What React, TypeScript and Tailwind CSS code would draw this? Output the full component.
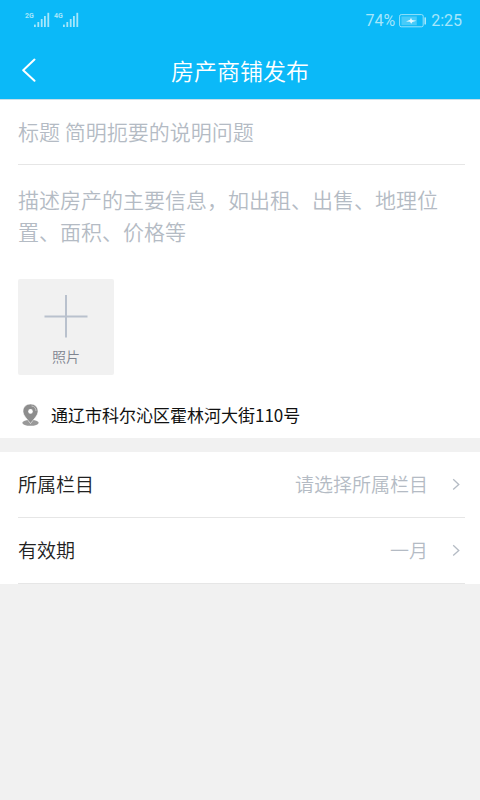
import React from "react";

const sans = "font-['Noto_Sans_CJK_SC','Noto_Sans',sans-serif]";

function Signal({ label }: { label: string }) {
  return (
    <div className="flex h-4 items-start">
      <span className="w-[9px] font-['Roboto',sans-serif] text-[7px] leading-2 font-bold">{label}</span>
      <svg width="16" height="16" viewBox="0 0 16 16" fill="currentColor" aria-hidden="true">
        <rect x="0" y="12.6" width="1.8" height="2.4" />
        <rect x="3.4" y="10" width="1.8" height="5" />
        <rect x="6.8" y="7" width="1.8" height="8" />
        <rect x="10" y="4" width="1.8" height="11" />
        <rect x="13.4" y="0.8" width="1.8" height="14.2" />
      </svg>
    </div>
  );
}

function Battery() {
  return (
    <svg width="28" height="14" viewBox="0 0 28 14" fill="none" aria-hidden="true">
      <rect x="0.6" y="0.6" width="23.6" height="12.2" rx="1.6" stroke="currentColor" strokeWidth="0.9" />
      <rect x="2.4" y="2.4" width="15.4" height="8.8" fill="currentColor" opacity="0.4" />
      <rect x="25.4" y="3.2" width="1.6" height="7.4" rx="0.6" fill="currentColor" />
      <path d="M7 7.4 L11 5.8 L12 3.8 L13 6 L17.4 6.8 L13.4 8 L12.2 9.8 L11 7.8 Z" fill="#e2f8ff" />
    </svg>
  );
}

function SelectRow({ id, label, options }: { id: string; label: string; options: string[] }) {
  return (
    <div className="ml-[18px] mr-[15px] flex h-[66px] items-center border-b border-[#e6e6e6] text-[19px]">
      <label htmlFor={id} className="shrink-0 text-[#222]">
        {label}
      </label>
      <select
        id={id}
        className="min-w-0 flex-1 appearance-none bg-transparent text-right font-[350] text-[#b4bbc4] outline-none [text-align-last:right]"
      >
        {options.map((option) => (
          <option key={option}>{option}</option>
        ))}
      </select>
      <svg className="ml-6 mr-1 shrink-0" width="9" height="14" viewBox="0 0 9 14" fill="none" aria-hidden="true">
        <path d="M1.2 1.2 L6.8 6.4 L1.2 11.6" stroke="#b4bbc4" strokeWidth="1.3" />
      </svg>
    </div>
  );
}

export default function App() {
  return (
    <div className={`min-h-screen bg-[#f1f1f1] font-[350] ${sans}`}>
      <header className="border-b border-[#c9dfe8] bg-[#0bb9f8]">
        <div className="flex h-10 items-center justify-between pl-[25px] pr-[18px] text-[#a6e6fb]">
          <div className="flex gap-1">
            <Signal label="2G" />
            <Signal label="4G" />
          </div>
          <div className="flex items-center gap-1 pt-0.5 font-['Roboto',sans-serif] text-base font-normal">
            <span>74%</span>
            <Battery />
            <span>2:25</span>
          </div>
        </div>
        <div className="grid h-[59px] grid-cols-[1fr_auto_1fr] items-center text-white">
          <button type="button" aria-label="返回" className="ml-5 justify-self-start">
            <svg width="18" height="24" viewBox="0 0 18 24" fill="none" aria-hidden="true">
              <path
                d="M14.5 1.6 L3.2 12.2 L14.5 22.8"
                stroke="currentColor"
                strokeWidth="2"
                strokeLinecap="round"
                strokeLinejoin="round"
              />
            </svg>
          </button>
          <h1 className="pt-px text-[23px] font-[350]">房产商铺发布</h1>
        </div>
      </header>

      <main>
        <section className="bg-white pb-[7px]">
          <div className="ml-[18px] mr-[15px] border-b border-[#e6e6e6]">
            <input
              type="text"
              aria-label="标题"
              placeholder="标题 简明扼要的说明问题"
              className="block h-16 w-full bg-transparent pb-0.5 text-[21px] outline-none placeholder:text-[#b4bbc4]"
            />
          </div>
          <textarea
            aria-label="描述"
            rows={2}
            placeholder="描述房产的主要信息，如出租、出售、地理位置、面积、价格等"
            className="mt-[18px] block w-full resize-none overflow-hidden bg-transparent pl-[18px] pr-6 text-[21px] leading-8 outline-none placeholder:text-[#b4bbc4]"
          />
          <button
            type="button"
            className="ml-[18px] mt-8 flex size-24 flex-col items-center rounded-xs bg-[#f1f1f1] pt-[15px] text-[14px] leading-5 text-[#7f8590]"
          >
            <svg width="44" height="44" viewBox="0 0 44 44" aria-hidden="true">
              <path d="M22 1 V43.5 M0.5 22.4 H43.5" stroke="#b9c1cd" strokeWidth="2" />
            </svg>
            <span className="mt-2">照片</span>
          </button>
          <div className="ml-[22px] mt-6 flex h-8 items-center gap-3">
            <svg width="17" height="24" viewBox="0 0 17 24" aria-hidden="true">
              <ellipse cx="8.5" cy="19.8" rx="8.2" ry="3" fill="#999" />
              <path
                d="M8.5 1 C4 1 1 4.2 1 8.3 C1 12.6 5.6 16.4 8.5 20.6 C11.4 16.4 16 12.6 16 8.3 C16 4.2 13 1 8.5 1 Z"
                fill="#8d8d8d"
                stroke="#fff"
                strokeWidth="0.6"
              />
              <path d="M9.5 3 C12.4 3.2 14 5.4 14 8" fill="none" stroke="#c4c4c4" strokeWidth="1" />
              <circle cx="8.5" cy="8.4" r="2.3" fill="#fff" />
            </svg>
            <span className="text-[17px] font-normal text-[#111]">通辽市科尔沁区霍林河大街110号</span>
          </div>
        </section>

        <section className="mt-[14px] bg-white">
          <SelectRow id="column" label="所属栏目" options={["请选择所属栏目"]} />
          <SelectRow id="validity" label="有效期" options={["一月"]} />
        </section>
      </main>
    </div>
  );
}
